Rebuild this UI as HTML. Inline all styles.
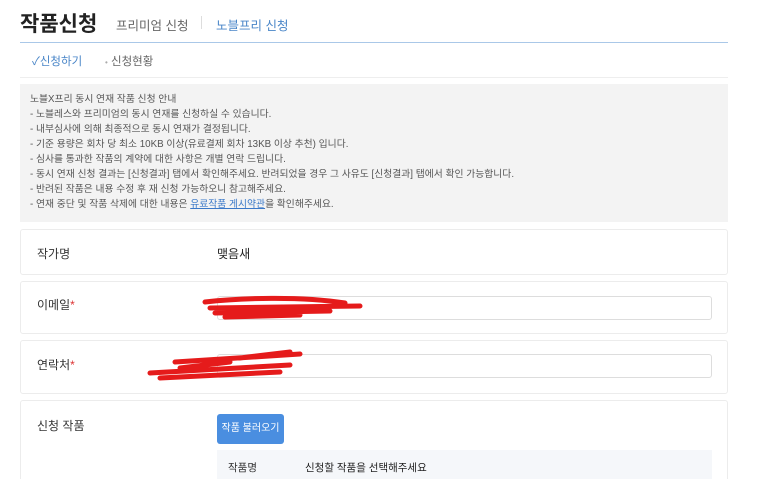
<!DOCTYPE html>
<html><head><meta charset="utf-8"><style>
*{box-sizing:border-box;margin:0;padding:0}
html,body{width:773px;height:479px;overflow:hidden}
body{background:#fff;font-family:"Liberation Sans","Noto Sans CJK KR",sans-serif;color:#333;position:relative}
.a{position:absolute}
.card{position:absolute;left:20px;width:708px;border:1px solid #ececec;border-radius:3px;background:#fff}
.lbl{position:absolute;left:16px;font-size:12px;color:#333}
.inp{position:absolute;left:196px;width:495px;height:24px;border:1px solid #ddd;border-radius:3px;background:#fff}
.st{color:#d33}
.info div{font-size:9.8px;line-height:15px;color:#555}
</style></head><body>
<div class="a" style="left:20px;top:8px;font-size:21px;font-weight:bold;color:#222">작품신청</div>
<div class="a" style="left:116px;top:15px;font-size:12.5px;color:#666">프리미엄 신청</div>
<div class="a" style="left:201px;top:16px;width:1px;height:13px;background:#ddd"></div>
<div class="a" style="left:216px;top:15px;font-size:12.5px;color:#4a86c8">노블프리 신청</div>
<div class="a" style="left:20px;top:42px;width:708px;height:1px;background:#aac8e8"></div>
<div class="a" style="left:32px;top:53px;font-size:11.5px;color:#4a86c8">✓신청하기</div>
<div class="a" style="left:105px;top:53px;font-size:11.5px;color:#666"><span style="font-size:8px;color:#aaa">•</span> 신청현황</div>
<div class="a" style="left:20px;top:77px;width:708px;height:1px;background:#eee"></div>
<div class="a info" style="left:20px;top:84px;width:708px;height:138px;background:#f3f3f3;padding:8px 0 0 10px">
<div>노블X프리 동시 연재 작품 신청 안내</div>
<div>- 노블레스와 프리미엄의 동시 연재를 신청하실 수 있습니다.</div>
<div>- 내부심사에 의해 최종적으로 동시 연재가 결정됩니다.</div>
<div>- 기준 용량은 회차 당 최소 10KB 이상(유료결제 회차 13KB 이상 추천) 입니다.</div>
<div>- 심사를 통과한 작품의 계약에 대한 사항은 개별 연락 드립니다.</div>
<div>- 동시 연재 신청 결과는 [신청결과] 탭에서 확인해주세요. 반려되었을 경우 그 사유도 [신청결과] 탭에서 확인 가능합니다.</div>
<div>- 반려된 작품은 내용 수정 후 재 신청 가능하오니 참고해주세요.</div>
<div>- 연재 중단 및 작품 삭제에 대한 내용은 <span style="color:#3a78c8;text-decoration:underline">유료작품 게시약관</span>을 확인해주세요.</div>
</div>
<div class="card" style="top:229px;height:46px"><div class="lbl" style="top:15px">작가명</div><div class="a" style="left:196px;top:15px;font-size:12px;color:#222">맺음새</div></div>
<div class="card" style="top:281px;height:53px"><div class="lbl" style="top:14px">이메일<span class="st">*</span></div><div class="inp" style="top:14px"></div></div>
<div class="card" style="top:340px;height:54px"><div class="lbl" style="top:15px">연락처<span class="st">*</span></div><div class="inp" style="top:13px"></div></div>
<div class="card" style="top:400px;height:90px"><div class="lbl" style="top:16px">신청 작품</div>
<div class="a" style="left:196px;top:13px;width:67px;height:30px;background:#4a8ee0;border-radius:3px;color:#fff;font-size:10px;line-height:30px;text-align:center">작품 불러오기</div>
<div class="a" style="left:196px;top:49px;width:495px;height:40px;background:#f5f7fa"><span class="a" style="left:11px;top:10px;font-size:10.5px">작품명</span><span class="a" style="left:88px;top:10px;font-size:10.5px;color:#222">신청할 작품을 선택해주세요</span></div>
</div>
<svg class="a" style="left:0;top:0" width="773" height="479">
<g stroke="#e51b1b" stroke-linecap="round" fill="none">
<path d="M205 302 C240 298 300 296 345 303 M210 308 L360 306 M215 313 L330 311 M225 317 L300 315" stroke-width="5"/>
<path d="M175 362 L300 354 M150 373 L290 365 M160 378 L280 372 M180 368 L230 362 M240 358 L290 352" stroke-width="5"/>
</g></svg>
</body></html>
